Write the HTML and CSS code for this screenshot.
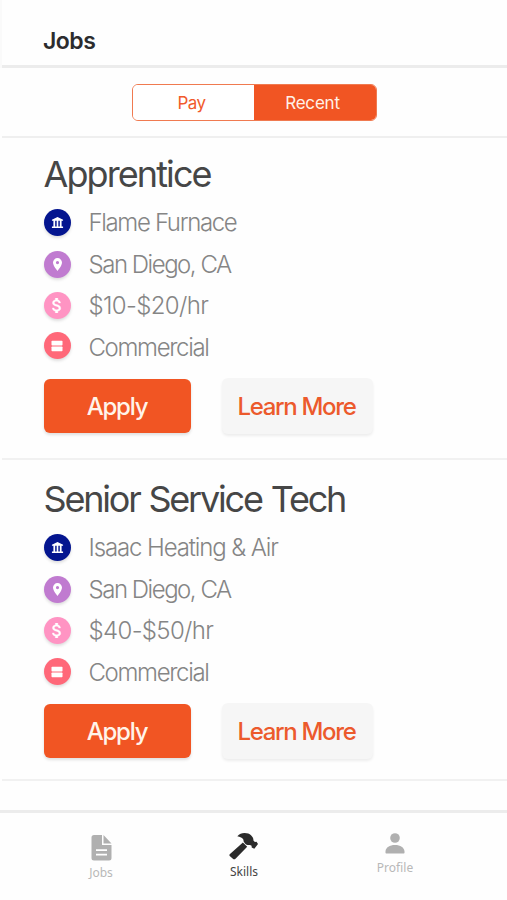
FILE: index.html
```html
<!DOCTYPE html>
<html lang="en">
<head>
<meta charset="utf-8">
<title>Jobs</title>
<link rel="stylesheet" href="styles.css">
</head>
<body>
<svg class="defs" aria-hidden="true">
  <symbol id="bank" viewBox="0 0 14 14"><path d="M7 1 13 4v1.200H1V4zM2.600 5h1.900v6.500H2.600zM6.100 5h1.800v6.500H6.100zM9.500 5h1.900v6.500H9.500zM1 11.200h12V13H1z"/></symbol>
  <symbol id="pin" viewBox="5 2 14 20"><path d="M12 2a7 7 0 0 0-7 7c0 5.250 7 13 7 13s7-7.750 7-13a7 7 0 0 0-7-7zm0 9.500a2.500 2.500 0 1 1 0-5 2.500 2.500 0 0 1 0 5z"/></symbol>
  <symbol id="dollar" viewBox="6 3 12 18"><path stroke="#fff" stroke-width=".4" d="M11.800 10.900c-2.270-.590-3-1.200-3-2.150 0-1.090 1.010-1.850 2.700-1.850 1.780 0 2.440.850 2.500 2.100h2.210c-.070-1.720-1.120-3.300-3.210-3.810V3h-3v2.160c-1.940.420-3.500 1.680-3.500 3.610 0 2.310 1.910 3.460 4.700 4.130 2.500.600 3 1.480 3 2.410 0 .690-.490 1.790-2.700 1.790-2.060 0-2.870-.920-2.980-2.100h-2.200c.120 2.190 1.760 3.420 3.680 3.830V21h3v-2.150c1.950-.370 3.500-1.500 3.500-3.550 0-2.840-2.430-3.810-4.700-4.400z"/></symbol>
  <symbol id="stack" viewBox="0 0 12 12"><rect x=".5" y=".7" width="11" height="4.800" rx=".7"/><rect x=".5" y="6.500" width="11" height="4.800" rx=".7"/></symbol>
</svg>
<div class="screen">
  <header class="header"><h1 class="header-title">Jobs</h1></header>
  <div class="filter">
    <div class="segmented">
      <button class="segment">Pay</button>
      <button class="segment segment-active">Recent</button>
    </div>
  </div>
  <main class="list">
    <article class="job">
      <h2 class="job-title title-short">Apprentice</h2>
      <ul class="details">
        <li class="detail"><span class="badge navy"><svg class="bank"><use href="#bank"/></svg></span><span class="company">Flame Furnace</span></li>
        <li class="detail"><span class="badge purple"><svg class="pin"><use href="#pin"/></svg></span><span class="city">San Diego, CA</span></li>
        <li class="detail"><span class="badge pink"><svg class="dollar"><use href="#dollar"/></svg></span><span class="pay">$10-$20/hr</span></li>
        <li class="detail"><span class="badge coral"><svg class="stack"><use href="#stack"/></svg></span><span class="type">Commercial</span></li>
      </ul>
      <div class="actions"><button class="btn apply">Apply</button><button class="btn learn">Learn More</button></div>
    </article>
    <article class="job job-second">
      <h2 class="job-title">Senior Service Tech</h2>
      <ul class="details">
        <li class="detail"><span class="badge navy"><svg class="bank"><use href="#bank"/></svg></span><span class="company-long">Isaac Heating &amp; Air</span></li>
        <li class="detail"><span class="badge purple"><svg class="pin"><use href="#pin"/></svg></span><span class="city">San Diego, CA</span></li>
        <li class="detail"><span class="badge pink"><svg class="dollar"><use href="#dollar"/></svg></span><span class="pay">$40-$50/hr</span></li>
        <li class="detail"><span class="badge coral"><svg class="stack"><use href="#stack"/></svg></span><span class="type">Commercial</span></li>
      </ul>
      <div class="actions"><button class="btn apply">Apply</button><button class="btn learn">Learn More</button></div>
    </article>
  </main>
  <nav class="nav">
    <a class="tab tab-jobs">
      <svg width="21" height="26" viewBox="0 0 21 26"><path fill="#b0b0b0" d="M3 0h8v10h9.500v13a2.500 2.500 0 0 1-2.500 2.500H3A2.500 2.500 0 0 1 .5 23V2.500A2.500 2.500 0 0 1 3 0zM12.500 0l8 8.500h-8z"/><path stroke="#fff" stroke-width="1.700" d="M5 15.200h11M5 19.700h11"/></svg>
      <span>Jobs</span>
    </a>
    <a class="tab tab-skills">
      <svg width="30" height="28" viewBox="0 0 30 28"><g fill="#2b2b2b"><path d="M8.300 4.200C10.500 1.800 12.500 1 15.500 1c3 0 5 .8 6.500 2.300 1.800 1.700 2.600 3.400 2.400 5.200l1.500 1.600 1.600-.3 1.500 2.200-3.700 4.800-2.600-1.300-.1-1.700-1.600-.9c-2 .4-3.800-.2-5-1.500L14.600 9.500C15 6.800 12.700 5 8.300 4.200z"/><path d="M13.900 10.600 18.200 14.700 6.500 26.700c-.8.8-1.800.8-2.600 0L1 24.200c-.8-.7-.8-1.500 0-2.200z"/></g></svg>
      <span>Skills</span>
    </a>
    <a class="tab tab-profile">
      <svg width="20" height="21" viewBox="0 0 20 21"><g fill="#b0b0b0"><circle cx="10" cy="5" r="4.800"/><path d="M.5 19.800v-1.600C1 14.500 4.500 12 10 12s9 2.500 9.500 6.200v1.600q0 .7-.7.700H1.200q-.7 0-.7-.7z"/></g></svg>
      <span>Profile</span>
    </a>
  </nav>
</div>
</body>
</html>
```
FILE: styles.css
```css
* { box-sizing: border-box; }
body { margin: 0; background: #fefefe; font-family: Inter, "Liberation Sans", sans-serif; }
h1, h2, ul { margin: 0; padding: 0; }
ul { list-style: none; }
button { margin: 0; padding: 0; font-family: inherit; white-space: nowrap; }
.defs { display: none; }
.screen { width: 507px; height: 900px; display: flex; flex-direction: column; overflow: hidden; }
.header { height: 68px; flex: none; margin-left: 2px; padding: 26px 0 0 41px; border-bottom: 3px solid #ececec; box-shadow: -3px 0 #fafafa; }
.header-title { font-size: 23px; line-height: 30px; font-weight: 600; letter-spacing: -.5px; color: #2c2c2e; }
.filter { height: 70px; flex: none; margin-left: 2px; padding: 16px 0 0 129.500px; border-bottom: 2px solid #efefef; }
.segmented { display: flex; width: 245px; height: 37px; border: 1px solid #f07a50; border-radius: 6px; overflow: hidden; }
.segment { width: 121px; padding-right: 3px; border: 0; background: #fff; color: #f15a2b; font-size: 17px; font-weight: 400; letter-spacing: -.5px; }
.segment-active { flex: 1; padding-right: 4px; background: #f15523; color: #fff1e8; letter-spacing: -.2px; }
.list { flex: none; height: 672px; margin-left: 2px; }
.job { height: 322px; padding: 14px 0 0 41.500px; border-bottom: 2px solid #f1f1f1; }
.job-second { height: 321px; padding-top: 17px; }
.job-title { height: 50px; line-height: 44px; font-size: 36px; font-weight: 400; letter-spacing: -2.200px; word-spacing: 1px; color: #464646; white-space: nowrap; }
.title-short { letter-spacing: -1.900px; }
.detail { display: flex; align-items: center; gap: 18px; height: 41.500px; font-size: 24px; font-weight: 300; color: #858585; white-space: nowrap; }
.company { letter-spacing: -1.350px; }
.company-long { letter-spacing: -1.120px; }
.city { letter-spacing: -1.480px; }
.pay { letter-spacing: -.650px; }
.type { letter-spacing: -1.350px; }
.badge { display: flex; align-items: center; justify-content: center; width: 27px; height: 27px; border-radius: 50%; box-shadow: 0 2px 3px rgba(0, 0, 0, .13); }
.badge svg { fill: #fff; }
.bank { width: 13px; height: 13px; }
.pin { width: 9px; height: 13px; }
.dollar { width: 10px; height: 15px; }
.stack { width: 12px; height: 12px; }
.navy { background: #04158f; }
.purple { background: #c07bd0; }
.pink { background: #ff94c3; }
.coral { margin-bottom: 3px; background: #ff6879; }
.job-second .coral { margin-bottom: 1px; }
.actions { display: flex; align-items: center; gap: 31.500px; height: 57px; margin-top: 9.500px; }
.btn { border: 0; border-radius: 6px; font-size: 24px; font-weight: 500; }
.apply { width: 147px; height: 54px; background: #f15523; color: #fff4ea; letter-spacing: -1.200px; box-shadow: 0 2px 3px rgba(0, 0, 0, .12); }
.learn { width: 151px; height: 56px; padding-right: 2px; background: #f6f6f6; color: #ec5a2c; letter-spacing: -1.350px; box-shadow: 0 2px 3px rgba(0, 0, 0, .07); }
.nav { flex: 1; display: flex; border-top: 3px solid #ececec; font-family: "Noto Sans", sans-serif; font-size: 12px; line-height: 16px; }
.tab { display: flex; flex-direction: column; align-items: center; color: #b8b8b8; }
.tab-jobs { width: 202px; padding-top: 22px; gap: 4px; }
.tab-skills { width: 84px; padding-top: 19px; gap: 4px; color: #444; }
.tab-profile { width: 218px; padding-top: 20px; gap: 6px; }
```
